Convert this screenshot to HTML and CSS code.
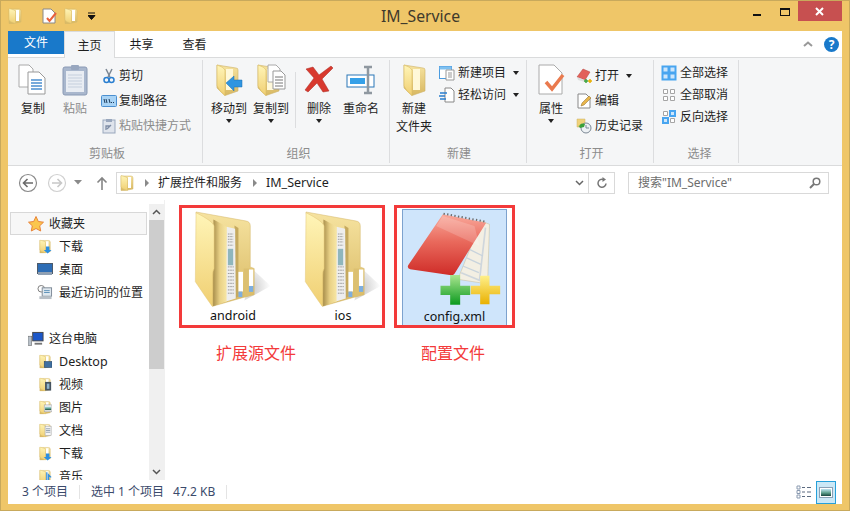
FILE: index.html
```html
<!DOCTYPE html>
<html>
  <head>
    <title>IM_Service</title>
    <meta charset="UTF-8" />
    <link rel="stylesheet" href="styles.css">
  </head>
  <body>
    <svg class="defs">
      <defs>
        <linearGradient id="back" x1="0" y1="0" x2="0" y2="1"><stop offset="0" stop-color="#f6e3a0"/><stop offset="1" stop-color="#d8b862"/></linearGradient>
        <linearGradient id="front" x1="0" y1="0" x2="0" y2="1"><stop offset="0" stop-color="#fff5b8"/><stop offset="1" stop-color="#f0cf72"/></linearGradient>
        <linearGradient id="mid" x1="0" y1="0" x2="1" y2="0"><stop offset="0" stop-color="#a98f4c"/><stop offset=".5" stop-color="#e9d186"/><stop offset="1" stop-color="#f7e6a4"/></linearGradient>
        <radialGradient id="shade" cx=".2" cy=".6" r=".8"><stop offset="0" stop-color="#c4c4c4"/><stop offset="1" stop-color="#fff"/></radialGradient>
        <linearGradient id="pad" x1="0" y1="0" x2="0" y2="1"><stop offset="0" stop-color="#f9a99b"/><stop offset=".45" stop-color="#e9695c"/><stop offset="1" stop-color="#cf2c28"/></linearGradient>
        <linearGradient id="green" x1="0" y1="0" x2="0" y2="1"><stop offset="0" stop-color="#a9e58f"/><stop offset="1" stop-color="#0c9a1f"/></linearGradient>
        <linearGradient id="yellow" x1="0" y1="0" x2="0" y2="1"><stop offset="0" stop-color="#fff08a"/><stop offset="1" stop-color="#e9b000"/></linearGradient>
        <linearGradient id="screen" x1="0" y1="0" x2="0" y2="1"><stop offset="0" stop-color="#bfe4f2"/><stop offset=".55" stop-color="#5fa08c"/><stop offset="1" stop-color="#17453d"/></linearGradient>
        <symbol id="sf" viewBox="0 0 15 16">
          <path d="M1 1H11Q13 1 13 3V14L5 15.500H1Z" fill="url(#back)" stroke="#d3b768" stroke-width=".5"/>
          <path d="M8 2H11V13H8Z" fill="#fff"/>
          <path d="M1 .5Q7 2 7.500 3V15.500Q2 14 1 12Z" fill="url(#front)" stroke="#d9bd6c" stroke-width=".5"/>
        </symbol>
        <symbol id="lf" viewBox="0 0 24 32">
          <path d="M2 1L21 4Q23 4 23 6V27L10 31.500L2 24Z" fill="url(#back)" stroke="#cfb266" stroke-width=".6"/>
          <path d="M11 5H18V26H11Z" fill="#fff8d8"/>
          <path d="M2 1Q9 3 10 6V31.500Q4 27 2 22Z" fill="url(#front)" stroke="#d6b862" stroke-width=".6"/>
        </symbol>
        <symbol id="big-folder" viewBox="70 30 235 295">
          <path d="M245 205L302 258L222 302Z" fill="url(#shade)"/>
          <path d="M75 33L225 60Q240 62 240 75V200L252 205V285L222 292L125 320Z" fill="url(#back)" stroke="#d4b76c" stroke-width="1.500"/>
          <path d="M220 205H240L238 288L222 292Z" fill="#dcc071"/>
          <path d="M236 208H249V258H236Z" fill="#fff"/>
          <path d="M236 258H249V276H236Z" fill="#7eaede"/>
          <path d="M192 74L204 82V290L192 296Z" fill="#c5a95e"/>
          <path d="M168 78L194 84L196 296L164 306Z" fill="#eeeeee"/>
          <path d="M172 100H188M172 108H188M172 116H188M172 124H188M172 134H188M172 200H190M172 210H190M172 220H190M172 230H190M172 240H190M172 250H190M172 260H190M172 270H190M172 280H190" stroke="#8b8b8b" stroke-width="2.500" stroke-dasharray="5 2"/>
          <path d="M172 145H188V195H172Z" fill="#8fb6bd"/>
          <path d="M204 215H218V275H204Z" fill="#fff"/>
          <path d="M204 275H216V292H204Z" fill="#7eaede"/>
          <path d="M128 56L162 74L168 80V305L127 320Z" fill="url(#mid)"/>
          <path d="M75 35Q125 60 130 75V205Q125 215 125 225V320Q122 318 73 245Z" fill="url(#front)" stroke="#e2c676" stroke-width="1.500"/>
        </symbol>
      </defs>
    </svg>

    <div class="window">
      <div class="titlebar">
        <div class="qat">
          <svg class="qat-folder"><use href="#sf"/></svg>
          <span class="qat-sep"></span>
          <svg class="qat-doc" viewBox="0 0 15 16">
            <path d="M1 1H9L13 5V15H1Z" fill="#fff" stroke="#888"/>
            <path d="M5 10L7.500 13L14 5" fill="none" stroke="#e8603c" stroke-width="2"/>
          </svg>
          <svg class="qat-folder"><use href="#sf"/></svg>
          <svg class="qat-caret" viewBox="0 0 8 8"><path d="M0 1H7M0 3.500H7L3.500 7.500Z" stroke="#111" fill="#111"/></svg>
          <span class="qat-sep"></span>
        </div>
        <div class="title">IM_Service</div>
        <div class="controls">
          <span class="min"></span>
          <span class="max"></span>
          <span class="close">
            <svg viewBox="0 0 9 9"><path d="M1 1L8 8M8 1L1 8" stroke="#fff" stroke-width="2"/></svg>
          </span>
        </div>
      </div>

      <div class="pane">
        <div class="tabs">
          <div class="tab file">文件</div>
          <div class="tab home">主页</div>
          <div class="tab">共享</div>
          <div class="tab">查看</div>
          <div class="tabs-right">
            <svg class="collapse" viewBox="0 0 10 6"><path d="M1 5L5 1.500L9 5" fill="none" stroke="#999" stroke-width="2"/></svg>
            <span class="help">?</span>
          </div>
        </div>

        <div class="ribbon">
          <div class="group g-clip">
            <div class="group-body">
              <div class="big">
                <svg class="big-icon" viewBox="0 0 30 32">
                  <path d="M1 1H11L15 5V23H1Z" fill="#fff" stroke="#aaa"/>
                  <path d="M10 8H21L27 14V30H10Z" fill="#fff" stroke="#999"/>
                  <path d="M13 16H24M13 19H24M13 22H24M13 25H24" stroke="#4b8fd0" stroke-width="1.500"/>
                </svg>
                <span>复制</span>
              </div>
              <div class="big off">
                <svg class="big-icon" viewBox="0 0 26 32">
                  <rect x="1" y="3" width="24" height="28" rx="2" fill="#a9b7cd" stroke="#8a9ab5"/>
                  <rect x="4" y="7" width="18" height="21" fill="#e9edf3"/>
                  <path d="M6 11H20M6 14H20M6 17H20M6 20H20M6 23H20" stroke="#c5cfdd"/>
                  <rect x="9" y="1" width="8" height="5" rx="1" fill="#98a7bf"/>
                </svg>
                <span>粘贴</span>
              </div>
              <div class="rows">
                <div class="row">
                  <svg class="small-icon" viewBox="0 0 16 16">
                    <path d="M5 1L9 9M11 1L7 9" stroke="#7c8794" stroke-width="1.500"/>
                    <circle cx="5.500" cy="12" r="2.500" fill="none" stroke="#2a7fd0" stroke-width="1.500"/>
                    <circle cx="10.500" cy="12" r="2.500" fill="none" stroke="#2a7fd0" stroke-width="1.500"/>
                  </svg>
                  <span>剪切</span>
                </div>
                <div class="row">
                  <svg class="small-icon" viewBox="0 0 16 16">
                    <rect x=".5" y="2.500" width="15" height="11" rx="1" fill="#a8d3f5" stroke="#4a8fd0"/>
                    <path d="M3 6L4 10M5 6L6 10M8 6L9 10M10 9.500H11M12 9.500H13" stroke="#1c3b5c"/>
                  </svg>
                  <span>复制路径</span>
                </div>
                <div class="row off">
                  <svg class="small-icon" viewBox="0 0 16 16">
                    <rect x="2" y="2" width="12" height="13" fill="#dfe4ec" stroke="#99a7bd"/>
                    <rect x="5" y="1" width="6" height="3" fill="#99a7bd"/>
                    <path d="M5 12V8H9M6 11L10 7" fill="none" stroke="#7d8ca5" stroke-width="1.300"/>
                  </svg>
                  <span>粘贴快捷方式</span>
                </div>
              </div>
            </div>
            <div class="group-label">剪贴板</div>
          </div>

          <div class="group g-org">
            <div class="group-body">
              <div class="big">
                <svg class="big-icon" viewBox="0 0 28 32">
                  <use href="#lf" width="24" height="32"/>
                  <path d="M11 19L19 12V16H27V23H19V27Z" fill="#2f95e0" stroke="#1c6fb0" stroke-width=".5"/>
                </svg>
                <span>移动到</span>
                <i class="caret"></i>
              </div>
              <div class="big">
                <svg class="big-icon" viewBox="0 0 30 32">
                  <use href="#lf" width="24" height="32"/>
                  <path d="M12 1H20L24 5V18H12Z" fill="#fff" stroke="#aaa"/>
                  <path d="M17 7H25L29 11V25H17Z" fill="#fff" stroke="#999"/>
                  <path d="M19 13H27M19 16H27M19 19H27M19 22H27" stroke="#777"/>
                </svg>
                <span>复制到</span>
                <i class="caret"></i>
              </div>
              <span class="inner-sep"></span>
              <div class="big">
                <svg class="big-icon" viewBox="0 0 30 32">
                  <path d="M2 5L9 3L15 11L27 2L29 4L18 15L25 27L19 28L13 19L4 28L1 26L10 14Z" fill="#d8392e" stroke="#a82a22" stroke-width=".5"/>
                </svg>
                <span>删除</span>
                <i class="caret"></i>
              </div>
              <div class="big">
                <svg class="big-icon" viewBox="0 0 30 32">
                  <rect x="1" y="11" width="27" height="12" fill="#fff" stroke="#2a77b8"/>
                  <rect x="4" y="14" width="15" height="6" fill="#35a0e8"/>
                  <path d="M18 3H26M22 3V29M18 29H26" fill="none" stroke="#8f98a0" stroke-width="2.500"/>
                </svg>
                <span>重命名</span>
              </div>
            </div>
            <div class="group-label">组织</div>
          </div>

          <div class="group g-new">
            <div class="group-body">
              <div class="big wide">
                <svg class="big-icon" viewBox="0 0 24 32"><use href="#lf"/></svg>
                <span>新建<br>文件夹</span>
              </div>
              <div class="rows tight">
                <div class="row">
                  <svg class="small-icon" viewBox="0 0 16 16">
                    <rect x=".5" y="1.500" width="12" height="12" fill="#fff" stroke="#4a9be0"/>
                    <rect x=".5" y="1.500" width="12" height="3" fill="#7ec0f0"/>
                    <path d="M7 5H15V15H7Z" fill="#fff" stroke="#999"/>
                    <path d="M9 8H13M9 10H13M9 12H13" stroke="#999"/>
                  </svg>
                  <span>新建项目</span>
                  <i class="caret caret-side"></i>
                </div>
                <div class="row">
                  <svg class="small-icon" viewBox="0 0 16 16">
                    <path d="M6 1H12L15 4V15H6Z" fill="#fff" stroke="#888"/>
                    <path d="M1 6H8M0 9H6M1 12H7" stroke="#2a7fd0" stroke-width="1.300"/>
                  </svg>
                  <span>轻松访问</span>
                  <i class="caret caret-side"></i>
                </div>
              </div>
            </div>
            <div class="group-label">新建</div>
          </div>

          <div class="group g-open">
            <div class="group-body">
              <div class="big">
                <svg class="big-icon" viewBox="0 0 28 32">
                  <path d="M2 1H17L25 9V30H2Z" fill="#fff" stroke="#aaa"/>
                  <path d="M9 18L15 25L26 11" fill="none" stroke="#ea7a4e" stroke-width="3.500"/>
                </svg>
                <span>属性</span>
                <i class="caret"></i>
              </div>
              <div class="rows open-rows">
                <div class="row">
                  <svg class="small-icon" viewBox="0 0 16 16">
                    <path d="M1 9L7 1L14 4L9 12Z" fill="#e2615a" stroke="#b5403a" stroke-width=".5"/>
                    <path d="M1 9L9 12V14L2 12Z" fill="#ddd"/>
                    <path d="M8 13H12M10 11V15" stroke="#3fa33f" stroke-width="1.500"/>
                    <path d="M12 13H16M14 11V15" stroke="#e9b000" stroke-width="1.500"/>
                  </svg>
                  <span>打开</span>
                  <i class="caret caret-side"></i>
                </div>
                <div class="row">
                  <svg class="small-icon" viewBox="0 0 16 16">
                    <path d="M2 1H10L14 5V15H2Z" fill="#fff" stroke="#888"/>
                    <path d="M5 13L6 10L13 3L15 5L8 12Z" fill="#e9b54a" stroke="#8a6a2a" stroke-width=".5"/>
                  </svg>
                  <span>编辑</span>
                </div>
                <div class="row">
                  <svg class="small-icon" viewBox="0 0 16 16">
                    <path d="M1 1H9V9H1Z" fill="#f0d27a" stroke="#cfb266" stroke-width=".5"/>
                    <circle cx="10" cy="10" r="5" fill="#eef2f5" stroke="#7b8794"/>
                    <path d="M10 7V10H13" fill="none" stroke="#7b8794"/>
                    <path d="M3 9A4 4 0 0 1 9 6L8 9L4 10L2 7" fill="#3aa03a"/>
                  </svg>
                  <span>历史记录</span>
                </div>
              </div>
            </div>
            <div class="group-label">打开</div>
          </div>

          <div class="group g-sel">
            <div class="group-body">
              <div class="rows tight">
                <div class="row">
                  <svg class="small-icon" viewBox="0 0 16 16">
                    <rect x=".5" y=".5" width="15" height="15" fill="#48a5f0"/>
                    <path d="M2.500 2.500H6.500V6.500H2.500ZM9.500 2.500H13.500V6.500H9.500ZM2.500 9.500H6.500V13.500H2.500ZM9.500 9.500H13.500V13.500H9.500Z" fill="#cde6fb"/>
                  </svg>
                  <span>全部选择</span>
                </div>
                <div class="row">
                  <svg class="small-icon" viewBox="0 0 16 16">
                    <path d="M2.500 2.500H6.500V6.500H2.500ZM9.500 2.500H13.500V6.500H9.500ZM2.500 9.500H6.500V13.500H2.500ZM9.500 9.500H13.500V13.500H9.500Z" fill="#fff" stroke="#a5a5a5"/>
                  </svg>
                  <span>全部取消</span>
                </div>
                <div class="row">
                  <svg class="small-icon" viewBox="0 0 16 16">
                    <path d="M2.500 2.500H6.500V6.500H2.500ZM9.500 9.500H13.500V13.500H9.500Z" fill="#fff" stroke="#a5a5a5"/>
                    <rect x="8" y="1" width="7" height="7" fill="#48a5f0"/>
                    <rect x="1" y="8" width="7" height="7" fill="#48a5f0"/>
                    <rect x="10" y="3" width="3" height="3" fill="#cde6fb"/>
                    <rect x="3" y="10" width="3" height="3" fill="#cde6fb"/>
                  </svg>
                  <span>反向选择</span>
                </div>
              </div>
            </div>
            <div class="group-label">选择</div>
          </div>
        </div>

        <div class="addressbar">
          <svg class="nav-round" viewBox="0 0 20 20">
            <circle cx="10" cy="10" r="8.500" fill="#fff" stroke="#8a8a8a" stroke-width="1.200"/>
            <path d="M15 10H6M9.500 6L5.500 10L9.500 14" fill="none" stroke="#6a6a6a" stroke-width="1.600"/>
          </svg>
          <svg class="nav-round" viewBox="0 0 20 20">
            <circle cx="10" cy="10" r="8.500" fill="#fff" stroke="#d0d0d0" stroke-width="1.200"/>
            <path d="M5 10H14M10.500 6L14.500 10L10.500 14" fill="none" stroke="#c8c8c8" stroke-width="1.600"/>
          </svg>
          <svg class="nav-drop" viewBox="0 0 8 5"><path d="M0 0H8L4 4.500Z" fill="#8a8a8a"/></svg>
          <svg class="nav-up" viewBox="0 0 12 14"><path d="M6 14V2M1.500 6.500L6 2L10.500 6.500" fill="none" stroke="#858585" stroke-width="1.600"/></svg>
          <div class="path">
            <svg class="path-folder"><use href="#sf"/></svg>
            <i class="crumb"></i>
            <span>扩展控件和服务</span>
            <i class="crumb"></i>
            <span class="latin">IM_Service</span>
            <svg class="path-drop" viewBox="0 0 9 6"><path d="M1 1L4.500 4.500L8 1" fill="none" stroke="#666" stroke-width="1.500"/></svg>
            <span class="refresh">
              <svg viewBox="0 0 12 12"><path d="M10 6.500A4 4 0 1 1 7.500 2.500" fill="none" stroke="#777" stroke-width="1.500"/><path d="M6.500 0L10 2.500L6.500 5Z" fill="#777"/></svg>
            </span>
          </div>
          <div class="search">
            <span>搜索"IM_Service"</span>
            <svg viewBox="0 0 12 12"><circle cx="7.500" cy="4.500" r="3.300" fill="none" stroke="#777" stroke-width="1.500"/><path d="M5 7L1 11" stroke="#777" stroke-width="2"/></svg>
          </div>
        </div>

        <div class="main">
          <div class="sidebar">
            <div class="nav">
              <div class="nav-row head selected">
                <svg class="nav-icon" viewBox="0 0 16 16"><path d="M8 .5L10.300 5.500L15.500 6.200L11.700 9.800L12.700 15L8 12.500L3.300 15L4.300 9.800L.5 6.200L5.700 5.500Z" fill="#fbc64e" stroke="#e8843a"/></svg>
                <span>收藏夹</span>
              </div>
              <div class="nav-row">
                <svg class="nav-icon" viewBox="0 0 15 16">
                  <use href="#sf"/>
                  <path d="M8 8H12V12H14.500L10 16L5.500 12H8Z" fill="#2c8fe0"/>
                </svg>
                <span>下载</span>
              </div>
              <div class="nav-row">
                <svg class="nav-icon desk" viewBox="0 0 16 13">
                  <rect x=".5" y=".5" width="15" height="10" fill="#2d6db5" stroke="#4d5b6b"/>
                  <rect x="1" y="9" width="14" height="3" fill="#8fa0b3"/>
                </svg>
                <span>桌面</span>
              </div>
              <div class="nav-row">
                <svg class="nav-icon desk" viewBox="0 0 16 16">
                  <circle cx="4" cy="4" r="3.500" fill="#fff" stroke="#777"/>
                  <rect x="5" y="3" width="10" height="9" fill="#dfe8ef" stroke="#7b8794"/>
                  <path d="M7 6H13M7 8H13" stroke="#5b8fb8"/>
                  <path d="M2 12H15V15H2Z" fill="#b8bfc6"/>
                </svg>
                <span>最近访问的位置</span>
              </div>
              <div class="nav-row head pc">
                <svg class="nav-icon" viewBox="0 0 17 16">
                  <rect x="5" y="1" width="11" height="9" fill="#1c57c8" stroke="#444"/>
                  <rect x="0" y="5" width="4" height="10" fill="#b8c0c8" stroke="#555" stroke-width=".5"/>
                  <path d="M7 13H15" stroke="#777" stroke-width="2"/>
                </svg>
                <span>这台电脑</span>
              </div>
              <div class="nav-row">
                <svg class="nav-icon" viewBox="0 0 15 16"><use href="#sf"/><rect x="6" y="8" width="9" height="7" fill="#3f6fa0" stroke="#24405c" stroke-width=".6"/></svg>
                <span class="latin">Desktop</span>
              </div>
              <div class="nav-row">
                <svg class="nav-icon" viewBox="0 0 15 16"><use href="#sf"/><rect x="7" y="5" width="7" height="10" fill="#46535f"/><rect x="9" y="7" width="3" height="6" fill="#8fb4cc"/></svg>
                <span>视频</span>
              </div>
              <div class="nav-row">
                <svg class="nav-icon" viewBox="0 0 15 16"><use href="#sf"/><rect x="6" y="5" width="9" height="8" fill="#eee" stroke="#999" stroke-width=".6"/><rect x="7" y="7" width="7" height="4" fill="url(#screen)"/></svg>
                <span>图片</span>
              </div>
              <div class="nav-row">
                <svg class="nav-icon" viewBox="0 0 15 16"><use href="#sf"/><rect x="7" y="3" width="7" height="11" fill="#f5f5f5" stroke="#999" stroke-width=".6"/><path d="M8 6H13M8 8H13M8 10H13" stroke="#8a9aaa"/></svg>
                <span>文档</span>
              </div>
              <div class="nav-row">
                <svg class="nav-icon" viewBox="0 0 15 16"><use href="#sf"/><path d="M8 8H12V12H14.500L10 16L5.500 12H8Z" fill="#2c8fe0"/></svg>
                <span>下载</span>
              </div>
              <div class="nav-row">
                <svg class="nav-icon" viewBox="0 0 15 16"><use href="#sf"/><path d="M9 3V12L7 14L9 15L11 13V6L14 9" fill="none" stroke="#3a90d8" stroke-width="1.500"/></svg>
                <span>音乐</span>
              </div>
            </div>
            <div class="scrollbar">
              <svg class="scroll-arrow" viewBox="0 0 9 6"><path d="M1 5L4.500 1.500L8 5" fill="none" stroke="#555" stroke-width="1.500"/></svg>
              <div class="thumb"></div>
              <div class="track"></div>
              <svg class="scroll-arrow" viewBox="0 0 9 6"><path d="M1 1L4.500 4.500L8 1" fill="none" stroke="#555" stroke-width="1.500"/></svg>
            </div>
          </div>

          <div class="content">
            <div class="mark folders">
              <div class="item">
                <svg class="folder-icon"><use href="#big-folder"/></svg>
                <span class="latin">android</span>
              </div>
              <div class="item">
                <svg class="folder-icon"><use href="#big-folder"/></svg>
                <span class="latin">ios</span>
              </div>
            </div>
            <div class="mark config">
              <div class="item picked">
                <svg class="pad-icon" viewBox="60 30 290 291">
                  <path d="M285 60L310 70L305 230L280 245L215 235Z" fill="#f3efe3" stroke="#b9a468"/>
                  <path d="M225 215L280 238L298 80" fill="none" stroke="#cfd6dc" stroke-width="5"/>
                  <path d="M230 195L278 215M240 170L284 190M250 145L290 165" stroke="#c8d3dc" stroke-width="4"/>
                  <path d="M170 40L300 65L205 218Q200 224 190 222L72 205Q60 200 68 190Z" fill="url(#pad)"/>
                  <path d="M150 75L280 135L265 75L170 45Z" fill="#fff" opacity=".18"/>
                  <path d="M172 38L298 62" fill="none" stroke="#6c6c6c" stroke-width="6" stroke-dasharray="4 7"/>
                  <path d="M192 222H222V254H252V282H222V311H192V282H163V254H192Z" fill="url(#green)"/>
                  <path d="M282 224H310V254H342V280H310V310H282V280H254V254H282Z" fill="url(#yellow)"/>
                </svg>
                <span class="latin">config.xml</span>
              </div>
            </div>
            <div class="note note-a">扩展源文件</div>
            <div class="note note-b">配置文件</div>
          </div>
        </div>

        <div class="status">
          <span>3 个项目</span>
          <i class="status-sep"></i>
          <span>选中 1 个项目</span>
          <span class="size">47.2 KB</span>
          <i class="status-sep"></i>
          <div class="views">
            <svg class="view-list" viewBox="0 0 16 14">
              <path d="M1 1H4V4H1ZM1 5.500H4V8.500H1ZM1 10H4V13H1Z" fill="#fff" stroke="#8a9ab0"/>
              <path d="M6 2.500H9M11 2.500H15M6 7H9M11 7H15M6 11.500H9M11 11.500H15" stroke="#5c6b80" stroke-width="1.200"/>
            </svg>
            <span class="view-big">
              <svg viewBox="0 0 14 11">
                <rect x=".5" y=".5" width="13" height="10" fill="#fff" stroke="#8aa0b5"/>
                <rect x="2" y="2" width="10" height="7" fill="url(#screen)"/>
              </svg>
            </span>
          </div>
        </div>
      </div>
    </div>
  </body>
</html>
```

FILE: styles.css
```css
* {
  box-sizing: border-box;
  font-family: "Noto Sans", "Noto Sans CJK SC", sans-serif;
}
body {
  margin: 0;
  font-size: 12px;
  line-height: 16px;
  color: #1e1e1e;
}
.defs {
  position: absolute;
  width: 0;
  height: 0;
}
.latin {
  font-size: 12.5px;
}
.window {
  width: 850px;
  height: 511px;
  padding: 0 7px 6px;
  display: flex;
  flex-direction: column;
  background: #efc668;
  border: 1px solid #c8a95c;
}

/* title bar */
.titlebar {
  height: 30px;
  display: flex;
  align-items: flex-start;
}
.qat {
  width: 97px;
  height: 30px;
  display: flex;
  align-items: center;
}
.qat svg {
  flex: none;
}
.qat-folder {
  width: 15px;
  height: 16px;
}
.qat-sep {
  width: 1px;
  height: 12px;
  margin: 0 10px 0 9px;
  background: #a89257;
}
.qat-doc {
  width: 15px;
  height: 16px;
  margin-right: 7px;
}
.qat-caret {
  width: 8px;
  height: 8px;
  margin: 0 10px 0 9px;
}
.title {
  flex: 1;
  padding-right: 8px;
  text-align: center;
  font-size: 15.75px;
  line-height: 30px;
  color: #3f3a2c;
}
.controls {
  width: 98px;
  display: flex;
  align-items: flex-start;
}
.min {
  width: 8px;
  height: 2px;
  margin: 13px 19px 0 9px;
  background: #111;
}
.max {
  width: 10px;
  height: 8px;
  margin: 7px 8px 0 0;
  border: 1px solid #111;
  border-top-width: 2px;
}
.close {
  width: 45px;
  height: 20px;
  display: flex;
  align-items: center;
  justify-content: center;
  background: #c75050;
}
.close svg {
  width: 9px;
  height: 9px;
}

.pane {
  height: 473px;
  display: flex;
  flex-direction: column;
  background: #fff;
}

/* tabs */
.tabs {
  height: 27px;
  flex: none;
  display: flex;
  align-items: flex-start;
  border-bottom: 1px solid #dadbdc;
}
.tab {
  width: 53px;
  height: 26px;
  text-align: center;
  line-height: 27px;
}
.file {
  width: 56px;
  height: 23px;
  line-height: 23px;
  color: #fff;
  background: #1979ca;
}
.home {
  width: 51px;
  height: 27px;
  background: #f5f6f7;
  border: 1px solid #dadbdc;
  border-bottom: 0;
}
.tabs-right {
  margin-left: auto;
  height: 26px;
  padding-right: 3px;
  display: flex;
  align-items: center;
  gap: 11px;
}
.collapse {
  width: 10px;
  height: 6px;
}
.help {
  width: 15px;
  height: 15px;
  border-radius: 50%;
  background: #1979ca;
  color: #fff;
  font-weight: bold;
  font-size: 12px;
  line-height: 15px;
  text-align: center;
}

/* ribbon */
.ribbon {
  height: 108px;
  flex: none;
  display: flex;
  padding-top: 2px;
  background: #f5f6f7;
  border-bottom: 1px solid #dadbdc;
}
.group {
  height: 103px;
  flex: none;
  display: flex;
  flex-direction: column;
  border-right: 1px solid #dcdddf;
}
.group-body {
  flex: 1;
  display: flex;
}
.group-label {
  height: 20px;
  line-height: 22px;
  text-align: center;
  color: #8c8c8c;
}
.g-clip {
  width: 195px;
  padding-left: 4px;
}
.g-org {
  width: 187px;
  padding-left: 5px;
}
.g-new {
  width: 137px;
  padding-left: 2px;
}
.g-open {
  width: 127px;
  padding-left: 3px;
}
.g-sel {
  width: 85px;
  padding-left: 7px;
}
.big {
  width: 42px;
  flex: none;
  padding-top: 4px;
  display: flex;
  flex-direction: column;
  align-items: center;
  text-align: center;
  line-height: 18px;
  white-space: nowrap;
}
.wide {
  width: 44px;
}
.big-icon {
  height: 32px;
  margin-bottom: 4px;
}
.off {
  color: #8c8c8c;
}
.caret {
  width: 0;
  height: 0;
  margin-top: 1px;
  border: 3.5px solid transparent;
  border-top: 4px solid #222;
  border-bottom: 0;
}
.caret-side {
  margin: 0 0 0 4px;
}
.inner-sep {
  width: 1px;
  height: 56px;
  margin: 12px 2px 0 3px;
  background: #dcdddf;
}
.rows {
  margin-left: 5px;
  padding-top: 3px;
}
.open-rows {
  margin-left: 4px;
}
.row {
  height: 25px;
  display: flex;
  align-items: center;
  gap: 2px;
  white-space: nowrap;
}
.small-icon {
  width: 16px;
  height: 16px;
  flex: none;
}
.tight {
  margin-left: 3px;
  padding-top: 2px;
}
.g-sel .tight {
  margin-left: 0;
}
.tight .row {
  height: 22px;
  gap: 3px;
}
.open-rows .row {
  gap: 3px;
}

/* address bar */
.addressbar {
  height: 34px;
  flex: none;
  display: flex;
  align-items: center;
  padding: 1px 13px 2px 10px;
}
.addressbar svg {
  flex: none;
}
.nav-round {
  width: 20px;
  height: 20px;
  margin-right: 9px;
}
.nav-drop {
  width: 8px;
  height: 5px;
  margin: 0 14px 0 -2px;
}
.nav-up {
  width: 12px;
  height: 14px;
  margin-right: 8px;
}
.path {
  width: 499px;
  height: 22px;
  display: flex;
  align-items: center;
  padding-left: 3px;
  border: 1px solid #d9d9d9;
}
.path-folder {
  width: 15px;
  height: 16px;
}
.crumb {
  width: 0;
  height: 0;
  margin: 0 9px 0 10px;
  border: 4px solid transparent;
  border-left: 4px solid #8a8a8a;
  border-right: 0;
}
span + .crumb {
  margin-left: 11px;
}
.path-drop {
  width: 9px;
  height: 6px;
  margin-left: auto;
}
.refresh {
  width: 26px;
  height: 20px;
  margin-left: 4px;
  display: flex;
  align-items: center;
  justify-content: center;
  border-left: 1px solid #d9d9d9;
}
.refresh svg {
  width: 12px;
  height: 12px;
}
.search {
  width: 201px;
  height: 22px;
  margin-left: 13px;
  display: flex;
  align-items: center;
  justify-content: space-between;
  padding: 0 7px 0 9px;
  color: #6d6d6d;
  border: 1px solid #d9d9d9;
}
.search svg {
  width: 12px;
  height: 12px;
}

/* main area */
.main {
  height: 280px;
  flex: none;
  display: flex;
}
.sidebar {
  width: 157px;
  flex: none;
  display: flex;
  border-right: 1px solid #f0f0f0;
}
.nav {
  width: 141px;
  height: 280px;
  padding-top: 12px;
  overflow: hidden;
}
.nav-row {
  height: 23px;
  padding-left: 31px;
  display: flex;
  align-items: center;
  gap: 7px;
  white-space: nowrap;
}
.nav-icon {
  width: 13px;
  height: 15px;
  flex: none;
}
.desk {
  width: 16px;
  margin: 0 -1px 0 -2px;
}
.head {
  padding-left: 20px;
  gap: 5px;
}
.head .nav-icon {
  width: 16px;
  height: 16px;
}
.selected {
  width: 137px;
  margin-left: 2px;
  padding-left: 17px;
  background: #f7f7f7;
  border: 1px solid #d8d8d8;
}
.pc {
  margin-top: 23px;
}
.scrollbar {
  width: 15px;
  margin-top: 4px;
  display: flex;
  flex-direction: column;
  align-items: center;
  background: #f0f0f0;
}
.scroll-arrow {
  width: 9px;
  height: 6px;
  margin: 5px 0;
  flex: none;
}
.thumb {
  width: 15px;
  height: 149px;
  background: #cdcdcd;
}
.track {
  flex: 1;
}
.content {
  flex: 1;
  padding: 5px 0 0 14px;
  display: grid;
  grid-template-columns: 206px 121px;
  grid-template-rows: 123px auto;
  column-gap: 9px;
  align-content: start;
}
.mark {
  border: 3px solid #f33a3a;
}
.folders {
  display: flex;
  gap: 32px;
  padding: 3px 0 0 12px;
}
.config {
  padding: 1px 5px 0;
}
.item {
  display: flex;
  flex-direction: column;
  align-items: center;
  color: #111;
}
.folder-icon {
  width: 78px;
  height: 97px;
}
.picked {
  height: 100%;
  padding-top: 1px;
  background: #cfe5fb;
  border: 1px solid #7da2ce;
  border-bottom: 0;
}
.pad-icon {
  width: 97px;
  height: 97px;
  margin-bottom: 1px;
}
.note {
  margin-top: 15px;
  font-size: 16px;
  line-height: 20px;
  color: #f33a3a;
}
.note-a {
  padding-left: 37px;
}
.note-b {
  padding-left: 27px;
}

/* status bar */
.status {
  height: 24px;
  flex: none;
  display: flex;
  align-items: center;
  padding-left: 14px;
  color: #3b4a6b;
}
.status-sep {
  width: 1px;
  height: 14px;
  margin: 0 11px;
  background: #e4e4e4;
}
.size {
  margin-left: 9px;
}
.views {
  margin-left: auto;
  padding-right: 6px;
  display: flex;
  align-items: center;
  gap: 4px;
}
.view-list {
  width: 16px;
  height: 14px;
}
.view-big {
  width: 20px;
  height: 23px;
  display: flex;
  align-items: center;
  justify-content: center;
  background: #cbe8f6;
  border: 1px solid #26a0da;
}
.view-big svg {
  width: 14px;
  height: 11px;
}
```
